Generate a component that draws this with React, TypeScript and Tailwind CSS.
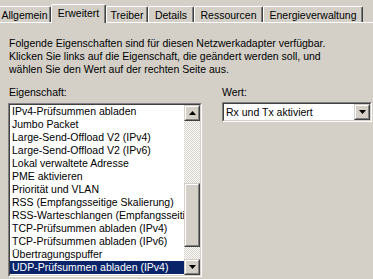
import React from 'react';

const ITEMS = [
  'IPv4-Prüfsummen abladen',
  'Jumbo Packet',
  'Large-Send-Offload V2 (IPv4)',
  'Large-Send-Offload V2 (IPv6)',
  'Lokal verwaltete Adresse',
  'PME aktivieren',
  'Priorität und VLAN',
  'RSS (Empfangsseitige Skalierung)',
  'RSS-Warteschlangen (Empfangsseitig)',
  'TCP-Prüfsummen abladen (IPv4)',
  'TCP-Prüfsummen abladen (IPv6)',
  'Übertragungspuffer',
  'UDP-Prüfsummen abladen (IPv4)',
];

const TABS = [
  { label: 'Allgemein', w: 'w-[53px] -ml-[2px]' },
  { label: 'Erweitert', w: 'w-[55px]', active: true },
  { label: 'Treiber', w: 'w-[42px]' },
  { label: 'Details', w: 'w-[46px]' },
  { label: 'Ressourcen', w: 'w-[69px]' },
  { label: 'Energieverwaltung', w: 'w-[100px]' },
];

function Arrow({ down }: { down?: boolean }) {
  return (
    <svg width="7" height="4" viewBox="0 0 7 4" className={down ? 'rotate-180' : ''}>
      <path d="M3.5 0 L7 4 L0 4 Z" fill="#000" />
    </svg>
  );
}

// classic raised 3d button face
function Raised({ children, className = '' }: { children?: React.ReactNode; className?: string }) {
  return (
    <div className={`border border-t-[#d4d0c8] border-l-[#d4d0c8] border-b-[#404040] border-r-[#404040] ${className}`}>
      <div className="flex h-full w-full items-center justify-center border border-t-white border-l-white border-b-[#808080] border-r-[#808080] bg-[#d4d0c8]">
        {children}
      </div>
    </div>
  );
}

function Sunken({ children, className = '' }: { children: React.ReactNode; className?: string }) {
  return (
    <div className={`border border-t-[#808080] border-l-[#808080] border-b-white border-r-white ${className}`}>
      <div className="h-full w-full border border-t-[#404040] border-l-[#404040] border-b-[#d4d0c8] border-r-[#d4d0c8] bg-white">
        {children}
      </div>
    </div>
  );
}

export default function App() {
  return (
    <div
      className="h-[279px] w-[373px] overflow-hidden bg-[#d4d0c8] text-[10.5px] leading-[13px] text-black"
      style={{ fontFamily: '"Liberation Sans", Arial, sans-serif' }}
    >
      <div className="flex h-[23px] items-end border-b border-white">
        {TABS.map((t) =>
          t.active ? (
            <div
              key={t.label}
              className={`relative z-10 -mb-px flex h-[19px] justify-center rounded-t-[2px] border-t border-l border-r border-t-white border-l-white border-r-[#404040] bg-[#d4d0c8] pt-[2px] shadow-[inset_-1px_0_#808080] ${t.w}`}
            >
              {t.label}
            </div>
          ) : (
            <div
              key={t.label}
              className={`flex h-[16px] shrink-0 justify-center rounded-t-[2px] border-t border-l border-r border-t-white border-l-white border-r-[#404040] pt-[2px] shadow-[inset_-1px_0_#808080] ${t.w}`}
            >
              {t.label}
            </div>
          )
        )}
      </div>

      <div className="pl-[9px] pt-[14px]">
        <p>Folgende Eigenschaften sind für diesen Netzwerkadapter verfügbar.</p>
        <p>Klicken Sie links auf die Eigenschaft, die geändert werden soll, und</p>
        <p>wählen Sie den Wert auf der rechten Seite aus.</p>
      </div>

      <div className="mt-[10px] flex pl-[8px]">
        <div className="w-[194px] shrink-0">
          <div className="pl-[1px]">Eigenschaft:</div>
          <Sunken className="mt-[4px] h-[174px]">
            <div className="flex h-full">
              <div className="flex-1 overflow-hidden">
                {ITEMS.map((it, i) => (
                  <div
                    key={it}
                    className={`h-[13px] whitespace-nowrap pl-[2px] ${i === ITEMS.length - 1 ? 'bg-[#0a246a] text-white' : ''}`}
                  >
                    {it}
                  </div>
                ))}
              </div>
              <div className="flex w-[16px] flex-col">
                <Raised className="h-[16px] w-[16px]">
                  <Arrow />
                </Raised>
                <div className="flex-1 bg-[repeating-conic-gradient(#d4d0c8_0%_25%,#ffffff_0%_50%)] bg-[length:2px_2px] pt-[62px]">
                  <Raised className="h-[64px] w-[16px]" />
                </div>
                <Raised className="h-[16px] w-[16px]">
                  <Arrow down />
                </Raised>
              </div>
            </div>
          </Sunken>
        </div>

        <div className="ml-[20px] w-[150px]">
          <div>Wert:</div>
          <Sunken className="mt-[3px] h-[20px]">
            <div className="flex h-full items-center">
              <div className="flex-1 pl-[2px]">Rx und Tx aktiviert</div>
              <Raised className="h-[16px] w-[16px]">
                <Arrow down />
              </Raised>
            </div>
          </Sunken>
        </div>
      </div>
    </div>
  );
}
